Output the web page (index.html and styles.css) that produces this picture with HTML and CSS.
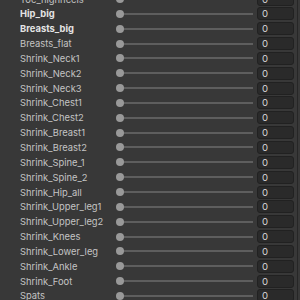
FILE: index.html
```html
<!DOCTYPE html>
<html lang="en">
<head>
  <meta charset="UTF-8">
  <title>Blend Shapes</title>
  <link rel="stylesheet" href="styles.css">
</head>
<body>

<div class="panel">
  <div class="list" id="list"></div>
  <div class="edge"></div>
</div>

<script>
  const shapes = [
    ['Toe_highheels', false],
    ['Hip_big', true],
    ['Breasts_big', true],
    ['Breasts_flat', false],
    ['Shrink_Neck1', false],
    ['Shrink_Neck2', false],
    ['Shrink_Neck3', false],
    ['Shrink_Chest1', false],
    ['Shrink_Chest2', false],
    ['Shrink_Breast1', false],
    ['Shrink_Breast2', false],
    ['Shrink_Spine_1', false],
    ['Shrink_Spine_2', false],
    ['Shrink_Hip_all', false],
    ['Shrink_Upper_leg1', false],
    ['Shrink_Upper_leg2', false],
    ['Shrink_Knees', false],
    ['Shrink_Lower_leg', false],
    ['Shrink_Ankle', false],
    ['Shrink_Foot', false],
    ['Spats', false],
    ['Spats_long', false]
  ];

  const list = document.getElementById('list');
  shapes.forEach(([name, changed]) => {
    const row = document.createElement('div');
    row.className = 'row';
    row.innerHTML = `
      <span class="label${changed ? ' changed' : ''}">${name}</span>
      <div class="slider"><span class="track"></span><span class="thumb"></span></div>
      <div class="field">0</div>`;
    list.appendChild(row);
  });
</script>

</body>
</html>
```

FILE: styles.css
```css
* {
  box-sizing: border-box;
}

html, body {
  margin: 0;
  height: 100%;
  overflow: hidden;
  background: #383838;
}

body {
  font-family: 'Inter', 'Liberation Sans', sans-serif;
  font-size: 9.4px;
  color: #c4c4c4;
}

.panel {
  display: flex;
  height: 100%;
}

.list {
  flex: 1;
  margin-top: -8.4px;
}

.edge {
  width: 1px;
  margin-right: 2px;
  background: #262626;
}

.row {
  display: flex;
  align-items: center;
  height: 14.85px;
  padding-left: 20px;
  padding-right: 3px;
}

.label {
  width: 96px;
  white-space: nowrap;
  overflow: hidden;
}

.label.changed {
  font-weight: 700;
  color: #e4e4e4;
}

.slider {
  position: relative;
  flex: 1;
  height: 100%;
  margin-right: 4px;
}

.track {
  position: absolute;
  left: 2px;
  right: 0;
  top: 50%;
  height: 2px;
  margin-top: -1px;
  background: #5e5e5e;
}

.thumb {
  position: absolute;
  left: 0;
  top: 50%;
  width: 8px;
  height: 8px;
  margin-top: -4px;
  border-radius: 50%;
  background: #999999;
}

.field {
  width: 37px;
  height: 13px;
  padding-left: 4px;
  line-height: 11px;
  background: #2a2a2a;
  border: 1px solid #212121;
  border-radius: 3px;
  color: #d6d6d6;
  font-size: 9.6px;
}
```
